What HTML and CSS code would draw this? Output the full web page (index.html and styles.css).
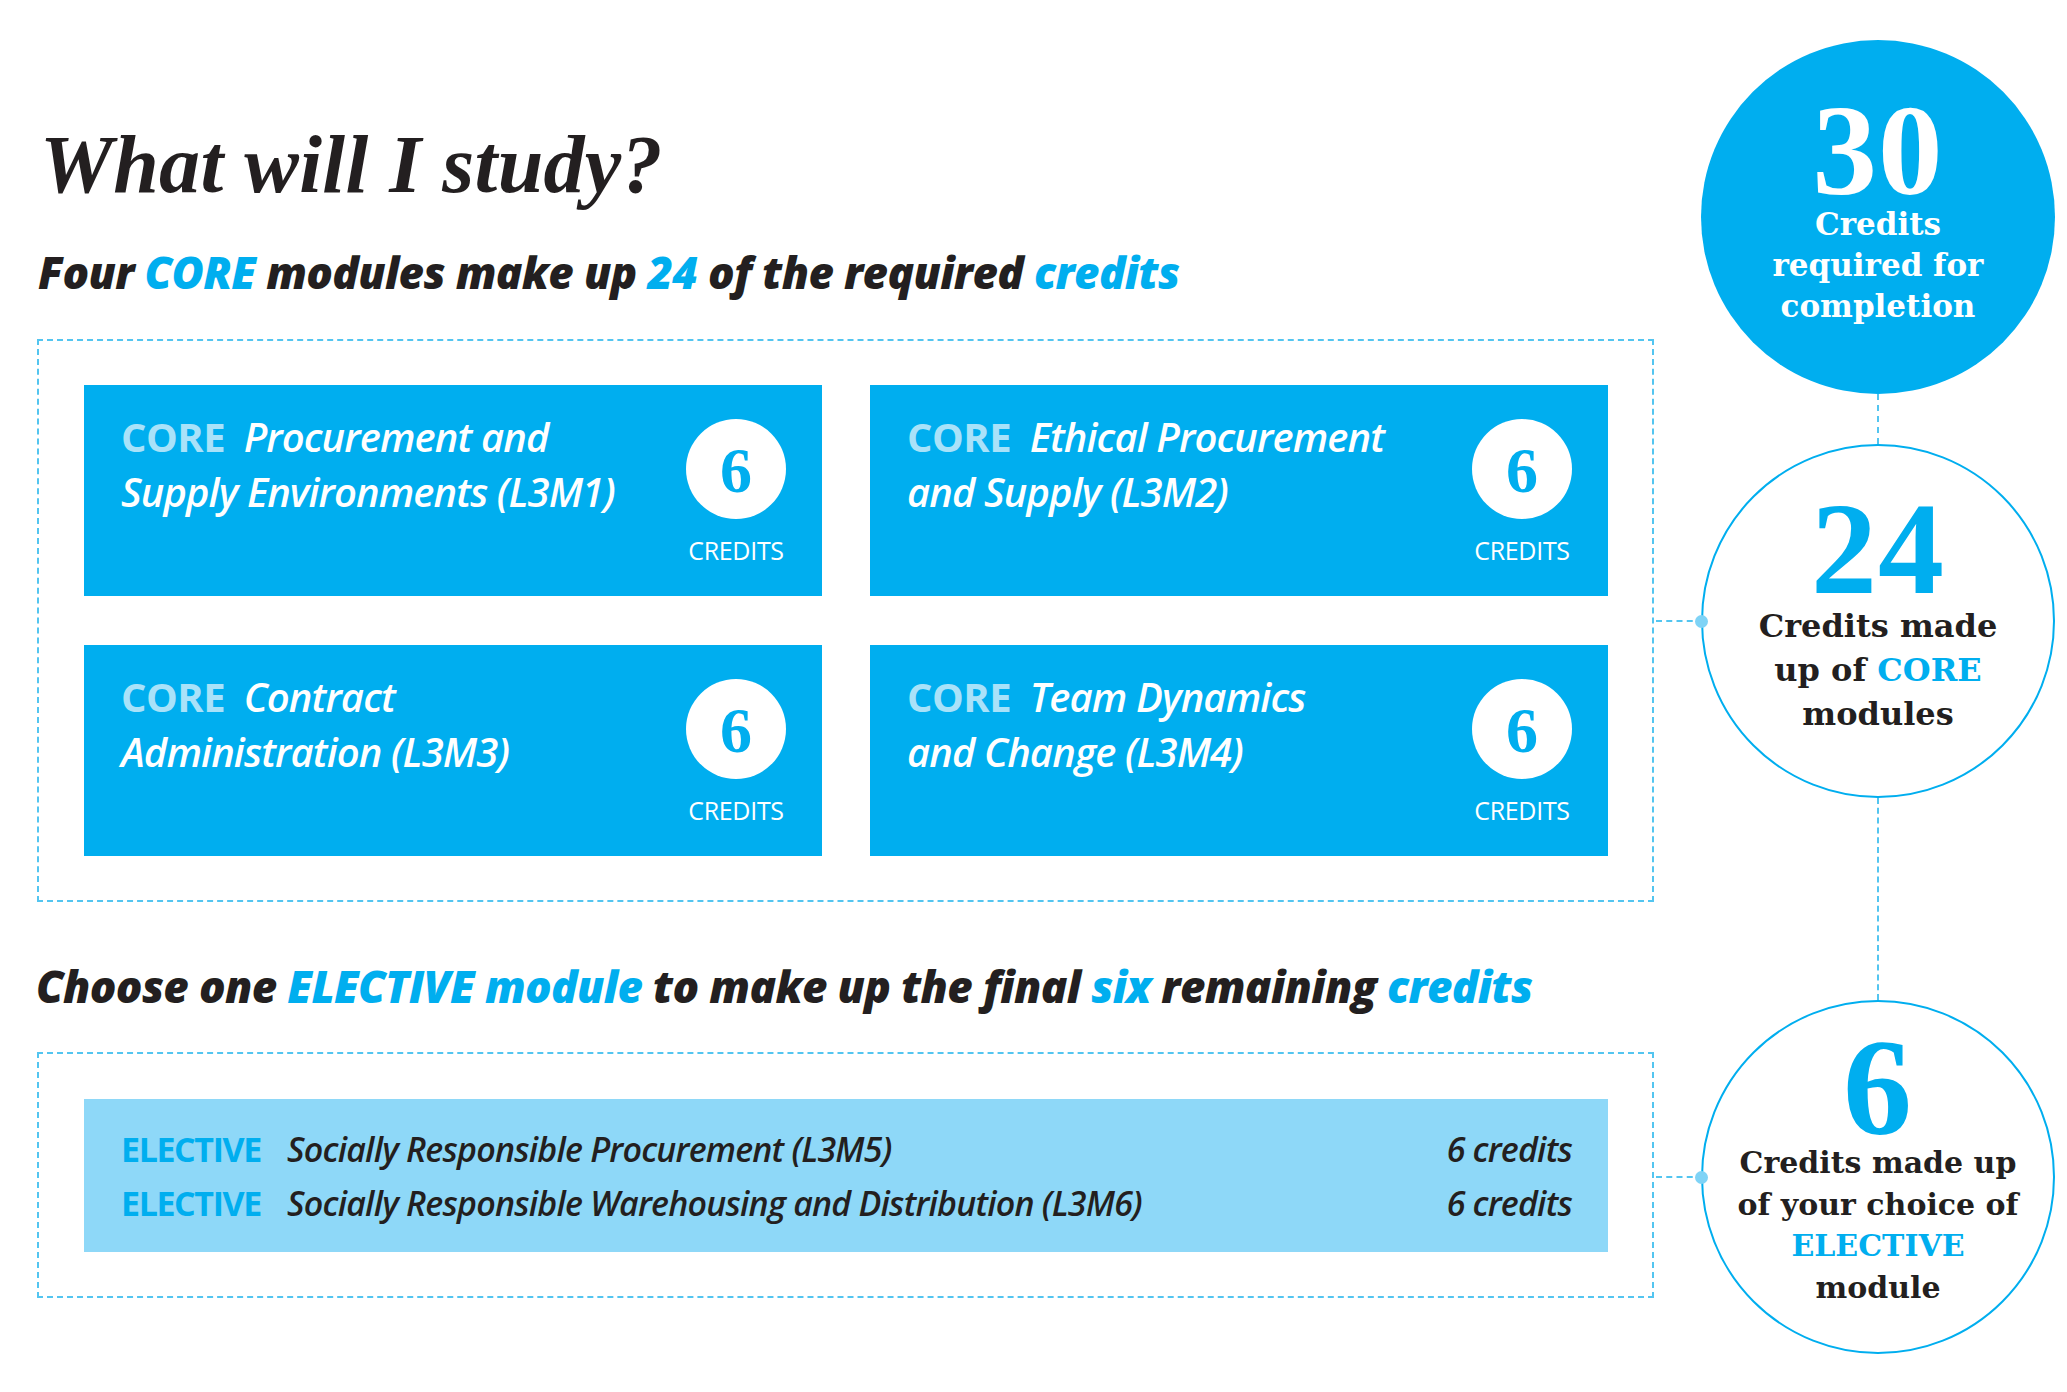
FILE: index.html
```html
<!DOCTYPE html>
<html lang="en">
<head>
<meta charset="utf-8">
<title>What will I study?</title>
<link rel="stylesheet" href="styles.css">
</head>
<body>
<div class="page">
  <div class="main">
    <h1 class="title">What will I study?</h1>
    <h2 class="subtitle">Four <span class="hl">CORE</span> modules make up <span class="hl">24</span> of the required <span class="hl">credits</span></h2>
    <div class="box core-box">
      <div class="card">
        <div class="ctext"><span class="core">CORE</span> Procurement and<br>Supply Environments (L3M1)</div>
        <div class="badge"><div class="bcircle">6</div><div class="blabel">CREDITS</div></div>
      </div>
      <div class="card">
        <div class="ctext"><span class="core">CORE</span> Ethical Procurement<br>and Supply (L3M2)</div>
        <div class="badge"><div class="bcircle">6</div><div class="blabel">CREDITS</div></div>
      </div>
      <div class="card">
        <div class="ctext"><span class="core">CORE</span> Contract<br>Administration (L3M3)</div>
        <div class="badge"><div class="bcircle">6</div><div class="blabel">CREDITS</div></div>
      </div>
      <div class="card">
        <div class="ctext"><span class="core">CORE</span> Team Dynamics<br>and Change (L3M4)</div>
        <div class="badge"><div class="bcircle">6</div><div class="blabel">CREDITS</div></div>
      </div>
    </div>
    <h2 class="subtitle sub2">Choose one <span class="hl">ELECTIVE module</span> to make up the final <span class="hl">six</span> remaining <span class="hl">credits</span></h2>
    <div class="box elective-box">
      <div class="band">
        <div class="erow"><span class="elabel">ELECTIVE</span><span class="etitle">Socially Responsible Procurement (L3M5)</span><span class="ecred">6 credits</span></div>
        <div class="erow"><span class="elabel">ELECTIVE</span><span class="etitle">Socially Responsible Warehousing and Distribution (L3M6)</span><span class="ecred">6 credits</span></div>
      </div>
    </div>
  </div>
  <div class="side">
    <div class="circle filled">
      <div class="num">30</div>
      <div class="ctxt">Credits<br>required for<br>completion</div>
    </div>
    <div class="vline v1"></div>
    <div class="circle outline c2 linked">
      <div class="num">24</div>
      <div class="ctxt">Credits made<br>up of <span class="blue">CORE</span><br>modules</div>
    </div>
    <div class="vline v2"></div>
    <div class="circle outline c3 linked">
      <div class="num">6</div>
      <div class="ctxt">Credits made up<br>of your choice of<br><span class="blue">ELECTIVE</span><br>module</div>
    </div>
  </div>
</div>
</body>
</html>
```
FILE: styles.css
```css
html, body {
  margin: 0;
  padding: 0;
  background: #ffffff;
}

body {
  width: 2067px;
  height: 1392px;
  overflow: hidden;
  color: #231f20;
  font-family: "Open Sans", "Liberation Sans", sans-serif;
}

.page {
  display: flex;
  align-items: flex-start;
  padding-left: 37px;
  gap: 47px;
}

.main {
  width: 1617px;
  flex: none;
}

.title {
  margin: 125px 0 0 3px;
  font-family: "Liberation Serif", serif;
  font-style: italic;
  font-weight: 700;
  font-size: 82px;
  line-height: 80px;
  height: 80px;
  letter-spacing: 0.3px;
  color: #231f20;
}

.subtitle {
  margin: 42px 0 0 1px;
  font-family: "Open Sans", "Liberation Sans", sans-serif;
  font-style: italic;
  font-weight: 800;
  font-size: 44px;
  line-height: 50px;
  height: 50px;
  letter-spacing: -0.65px;
  white-space: nowrap;
  color: #231f20;
}

.subtitle.sub2 {
  margin-top: 59px;
  margin-left: -1px;
  letter-spacing: -0.65px;
}

.hl {
  color: #00aeef;
}

.box {
  border: 2px dashed #53c5f0;
  box-sizing: border-box;
  position: relative;
}

.core-box {
  margin-top: 42px;
  padding: 44px 44px 44px 45px;
  display: grid;
  grid-template-columns: 738px 738px;
  column-gap: 48px;
  row-gap: 49px;
}

.card {
  background: #00aeef;
  height: 211px;
  box-sizing: border-box;
  display: flex;
  align-items: flex-start;
  padding: 0 36px 0 37px;
  color: #ffffff;
}

.ctext {
  flex: 1;
  padding-top: 24px;
  font-style: italic;
  font-weight: 600;
  font-size: 40px;
  line-height: 55px;
  white-space: nowrap;
  letter-spacing: -0.9px;
}

.core {
  font-style: normal;
  font-weight: 700;
  color: #a9e2f9;
  margin-right: 9px;
  letter-spacing: -0.5px;
}

.badge {
  width: 100px;
  margin-top: 34px;
  display: flex;
  flex-direction: column;
  align-items: center;
}

.bcircle {
  width: 100px;
  height: 100px;
  border-radius: 50%;
  background: #ffffff;
  color: #00aeef;
  font-family: "Liberation Serif", serif;
  font-weight: 700;
  font-size: 64px;
  line-height: 104px;
  text-align: center;
}

.blabel {
  margin-top: 16px;
  font-size: 25px;
  line-height: 30px;
  font-weight: 400;
  letter-spacing: -0.3px;
  white-space: nowrap;
}

.elective-box {
  margin-top: 41px;
  padding: 45px 44px 44px 45px;
}

.band {
  background: #8ed8f8;
  height: 153px;
  box-sizing: border-box;
  padding: 23px 36px 0 37px;
}

.erow {
  display: flex;
  align-items: baseline;
  font-size: 34px;
  line-height: 54px;
  white-space: nowrap;
}

.elabel {
  color: #00aeef;
  font-weight: 700;
  width: 142px;
  margin-right: 24px;
  letter-spacing: -1.4px;
}

.etitle {
  flex: 1;
  font-style: italic;
  font-weight: 600;
  letter-spacing: -0.8px;
}

.ecred {
  font-style: italic;
  font-weight: 600;
  letter-spacing: -0.8px;
}

.side {
  width: 354px;
  flex: none;
  display: flex;
  flex-direction: column;
  align-items: center;
  padding-top: 40px;
}

.circle {
  width: 354px;
  height: 354px;
  border-radius: 50%;
  box-sizing: border-box;
  display: flex;
  flex-direction: column;
  align-items: center;
  position: relative;
  text-align: center;
}

.filled {
  background: #00aeef;
  color: #ffffff;
  padding-top: 61px;
}

.outline {
  border: 2px solid #00aeef;
  background: #ffffff;
  color: #231f20;
}

.c2 {
  padding-top: 53px;
}

.c3 {
  padding-top: 36px;
}

.num {
  font-family: "Liberation Serif", serif;
  font-weight: 700;
  font-size: 129px;
  line-height: 100px;
  height: 100px;
  letter-spacing: 1px;
}

.outline .num {
  color: #00aeef;
  font-size: 132px;
}

.c3 .num {
  font-size: 138px;
}

.ctxt {
  font-family: "DejaVu Serif", serif;
  font-weight: 700;
  font-size: 31px;
  line-height: 41px;
  white-space: nowrap;
  margin-top: 3px;
}

.c2 .ctxt {
  font-size: 32px;
  line-height: 44px;
  margin-top: 5px;
}

.c3 .ctxt {
  font-size: 30px;
  line-height: 41.5px;
  margin-top: 4px;
}

.blue {
  color: #00aeef;
}

.vline {
  width: 0;
  border-left: 2px dashed #53c5f0;
}

.v1 {
  height: 50px;
}

.v2 {
  height: 202px;
}

.linked::before {
  content: "";
  position: absolute;
  right: 100%;
  top: 50%;
  width: 47px;
  border-top: 2px dashed #53c5f0;
  margin-top: -1px;
}

.linked::after {
  content: "";
  position: absolute;
  left: -8px;
  top: 50%;
  width: 13px;
  height: 13px;
  margin-top: -6px;
  border-radius: 50%;
  background: #7fd3f6;
}
```
